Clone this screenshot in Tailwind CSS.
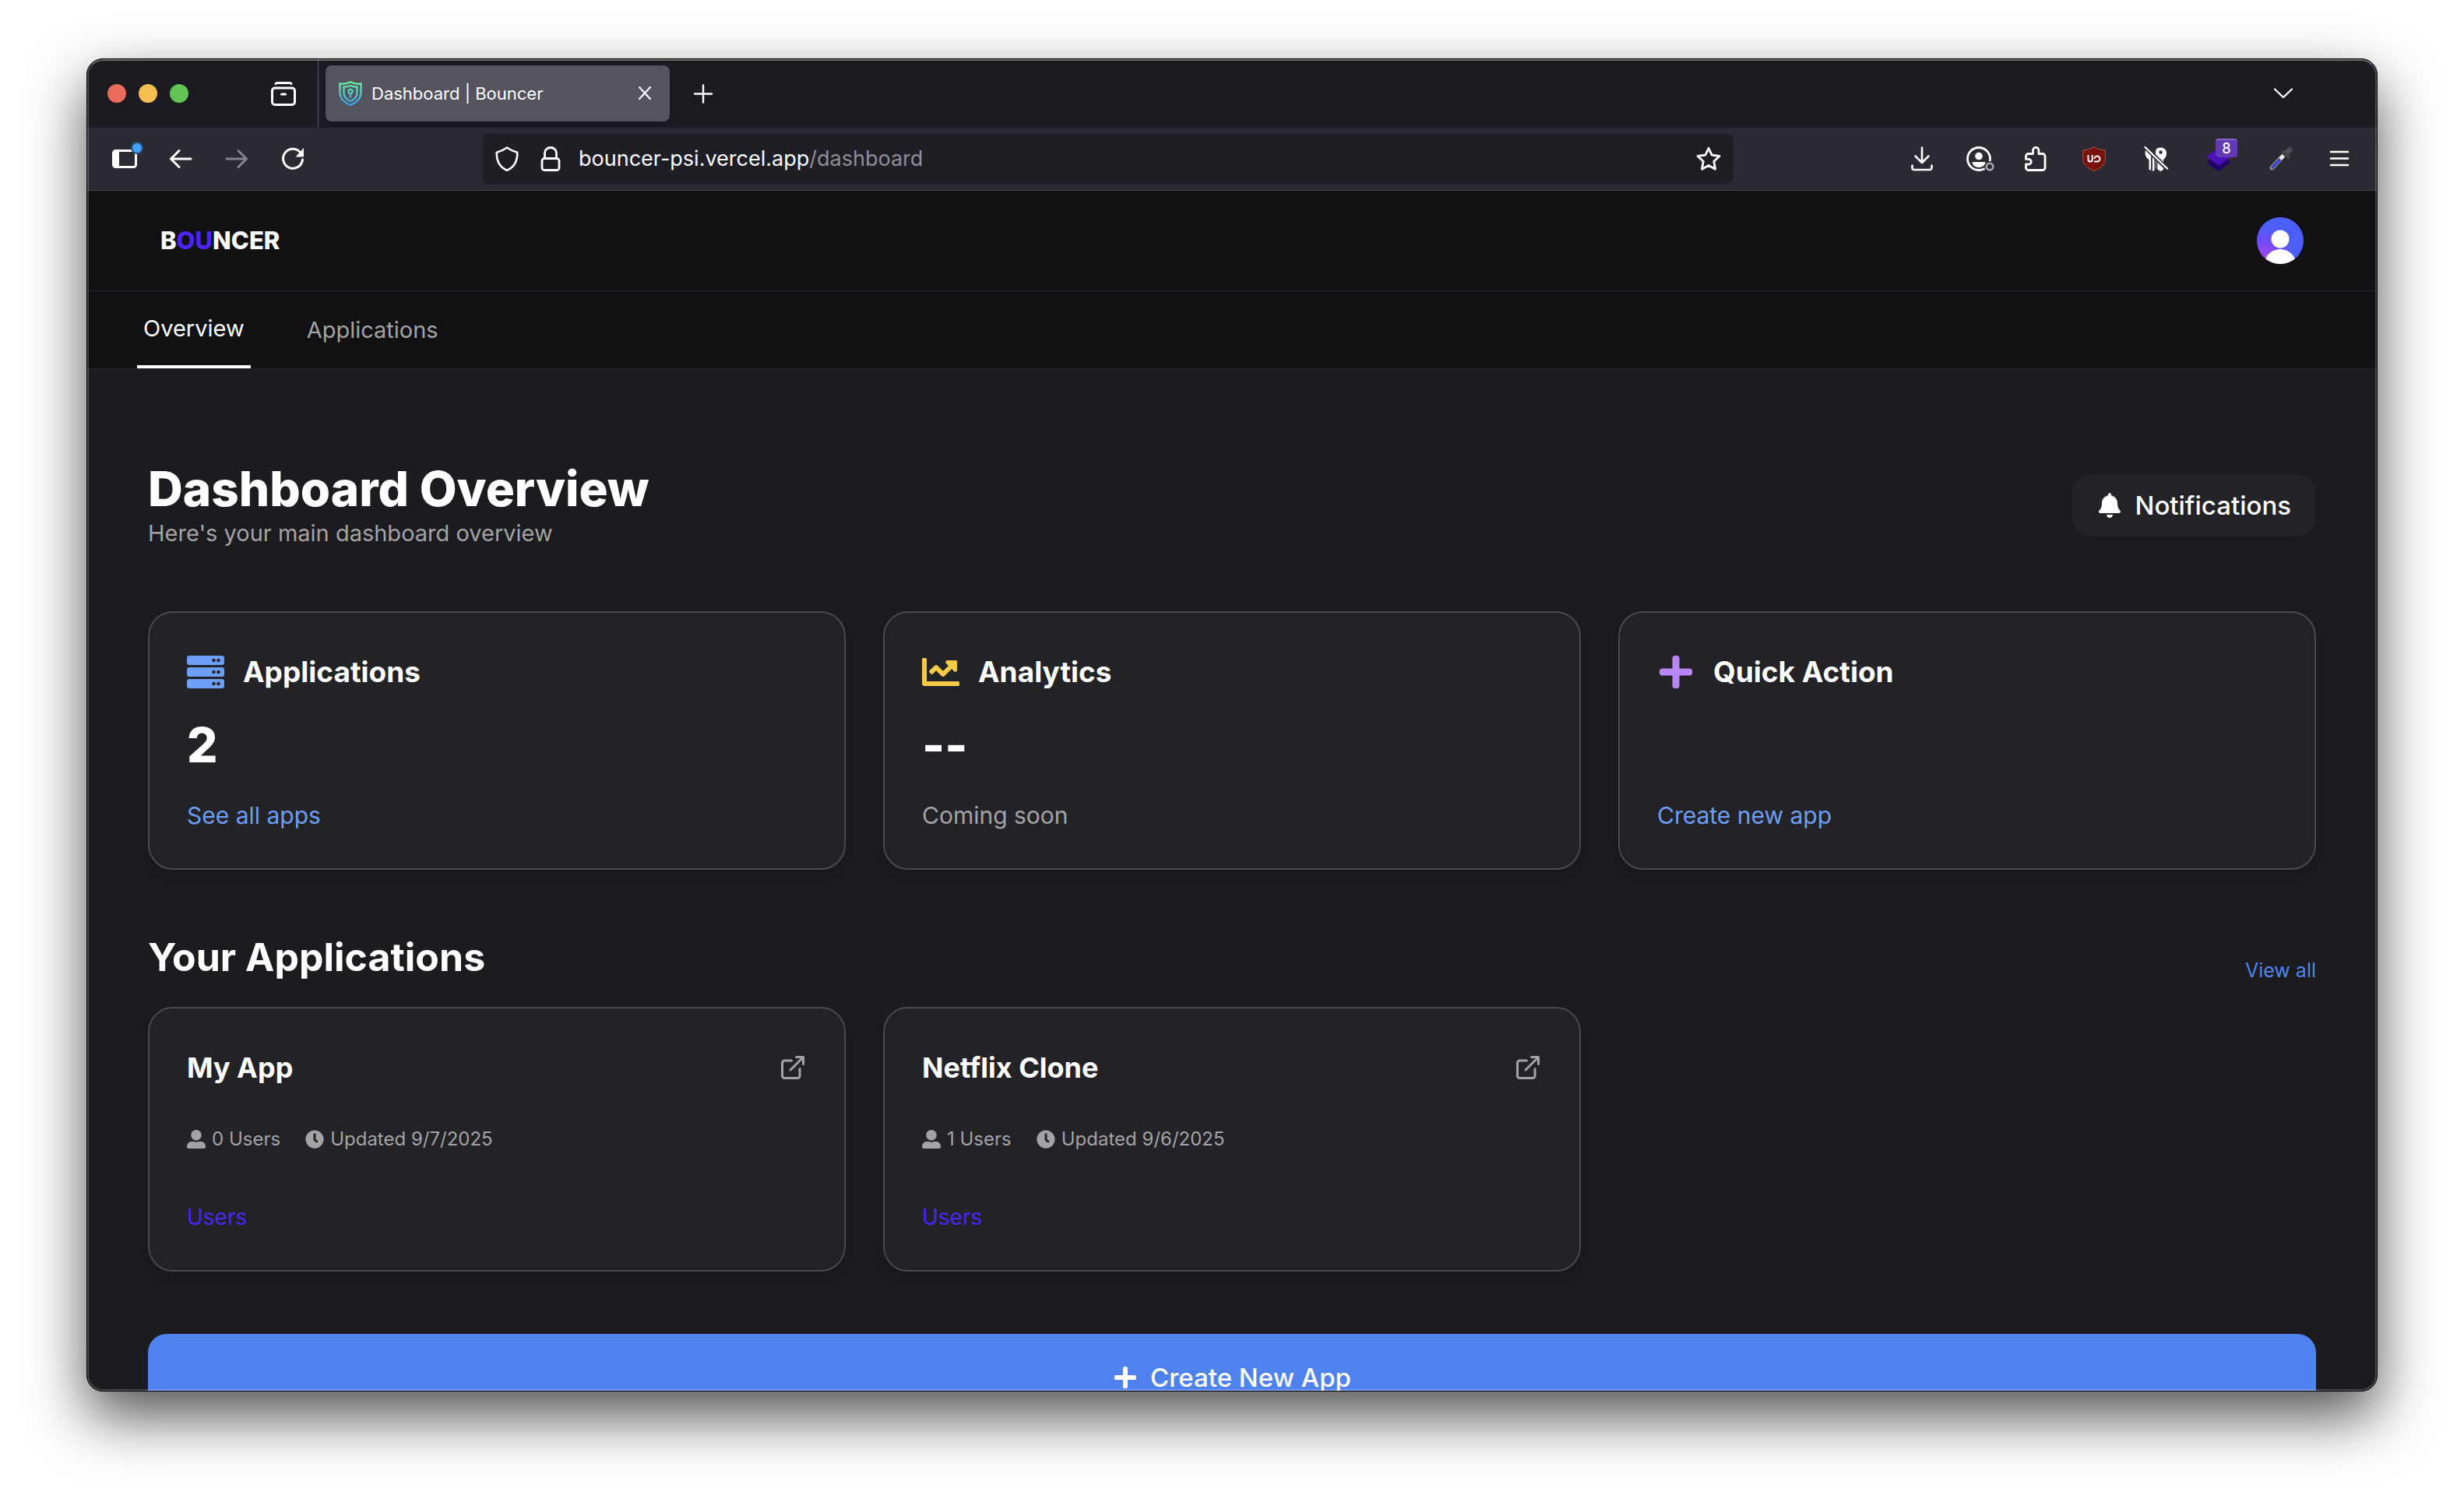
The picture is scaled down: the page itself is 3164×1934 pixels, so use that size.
<!DOCTYPE html>
<html lang="en">
<head>
<meta charset="utf-8">
<meta name="viewport" content="width=device-width, initial-scale=1">
<title>Dashboard | Bouncer</title>
<script src="https://cdn.jsdelivr.net/npm/@tailwindcss/browser@4"></script>
</head>
<body class="bg-white font-['Inter',sans-serif] text-white antialiased">
<svg class="hidden" aria-hidden="true">
  <symbol id="plus" viewBox="0 0 448 512"><path fill="currentColor" d="M416 208H272V64c0-17.67-14.33-32-32-32h-32c-17.67 0-32 14.33-32 32v144H32c-17.67 0-32 14.33-32 32v32c0 17.67 14.33 32 32 32h144v144c0 17.67 14.33 32 32 32h32c17.67 0 32-14.33 32-32V304h144c17.67 0 32-14.33 32-32v-32c0-17.67-14.33-32-32-32z"/></symbol>
  <symbol id="person" viewBox="0 0 512 512"><path fill="currentColor" d="M256 288c79.5 0 144-64.5 144-144S335.5 0 256 0 112 64.5 112 144s64.5 144 144 144zm128 32h-55.1c-22.2 10.2-46.9 16-72.9 16s-50.6-5.8-72.9-16H128c-70.7 0-128 57.3-128 128v16c0 26.5 21.5 48 48 48h416c26.5 0 48-21.5 48-48v-16c0-70.7-57.3-128-128-128z"/></symbol>
  <symbol id="clock" viewBox="0 0 512 512"><path fill="currentColor" d="M256,8C119,8,8,119,8,256S119,504,256,504,504,393,504,256,393,8,256,8Zm92.49,313h0l-20,25a16,16,0,0,1-22.49,2.5h0l-67-49.72a40,40,0,0,1-15-31.23V112a16,16,0,0,1,16-16h32a16,16,0,0,1,16,16V256l58,42.5A16,16,0,0,1,348.49,321Z"/></symbol>
  <symbol id="external" viewBox="0 0 24 24"><path fill="none" stroke="currentColor" stroke-width="2" stroke-linecap="round" stroke-linejoin="round" d="M18 13v6a2 2 0 0 1-2 2H5a2 2 0 0 1-2-2V8a2 2 0 0 1 2-2h6M15 3h6v6M10 14 21 3"/></symbol>
</svg>

<div class="flex h-screen px-[111px] pt-[75px] pb-[147px]">
  <div class="relative flex min-w-0 flex-1 flex-col overflow-hidden rounded-[21px] border border-black bg-[#1c1b1f] shadow-[0_32px_76px_rgba(0,0,0,0.68)]">

    <!-- Tab strip -->
    <div class="flex h-[88px] shrink-0 items-center bg-[#1c1b22] pl-[26px]">
      <div class="flex gap-4">
        <button type="button" aria-label="Close window" class="size-6 rounded-full bg-[#ec6a5e]"></button>
        <button type="button" aria-label="Minimise window" class="size-6 rounded-full bg-[#f4bf4f]"></button>
        <button type="button" aria-label="Zoom window" class="size-6 rounded-full bg-[#61c554]"></button>
      </div>
      <button type="button" aria-label="Recent browsing" class="ml-[106px] size-8">
        <svg viewBox="0 0 32 32" class="size-8" fill="none" stroke="currentColor" stroke-width="3" stroke-linecap="round"><path d="M6 3.500C6.500 2.500 7.500 2.500 8.500 2.500h15c1 0 2 0 2.500 1"/><rect x="1.500" y="9" width="29" height="21.500" rx="3.500"/><path d="M13.500 17h5"/></svg>
      </button>
      <div class="ml-7 w-px self-stretch bg-[#5b5a63]"></div>
      <div class="ml-[9px] flex h-[72px] w-[442px] items-center rounded-lg bg-[#55535e] pr-5 pl-4 shadow-md">
        <svg viewBox="0 0 32 32" class="size-8 shrink-0" fill="none" stroke="url(#fav)" stroke-width="2.400"><defs><linearGradient id="fav" x1="0" y1="0" x2="0" y2="32" gradientUnits="userSpaceOnUse"><stop stop-color="#6df0a0"/><stop offset=".45" stop-color="#4fcfc0"/><stop offset="1" stop-color="#3f9cf5"/></linearGradient></defs><path d="M16 1.200C11.500 3.700 6.500 4 2.500 3.500v11C2.500 22 8 28 16 30.800 24 28 29.500 22 29.500 14.500v-11C25.500 4 20.500 3.700 16 1.200z"/><path d="M16 6c-2.800 1.300-6 1.700-8.500 1.500v7.500c0 5 3.500 8.800 8.500 11 5-2.200 8.500-6 8.500-11V7.500C22 7.700 18.800 7.300 16 6z"/><circle cx="16" cy="13.500" r="2.600"/><path d="M16 16v5.500"/></svg>
        <span class="ml-[11px] flex-1 truncate text-[22px] leading-8">Dashboard | Bouncer</span>
        <button type="button" aria-label="Close tab" class="size-6"><svg viewBox="0 0 24 24" class="size-6" fill="none" stroke="currentColor" stroke-width="2.200" stroke-linecap="round"><path d="M5 4l14 15M19 4 5 19"/></svg></button>
      </div>
      <button type="button" aria-label="New tab" class="ml-[27px] size-8"><svg viewBox="0 0 32 32" class="size-8" fill="none" stroke="currentColor" stroke-width="2.400" stroke-linecap="round"><path d="M16 5.500v22M5 16.500h22"/></svg></button>
      <button type="button" aria-label="List all tabs" class="mr-[104px] ml-auto size-8"><svg viewBox="0 0 32 32" class="size-8" fill="none" stroke="currentColor" stroke-width="2.400" stroke-linecap="round" stroke-linejoin="round"><path d="M5 10.500l11 10.500 11-10.500"/></svg></button>
    </div>

    <!-- Navigation toolbar -->
    <div class="flex h-[81px] shrink-0 items-center border-b border-[#424148] bg-[#2b2a33] px-8">
      <div class="flex gap-10">
        <button type="button" aria-label="Sidebar" class="relative size-8">
          <svg viewBox="0 0 32 32" class="size-8"><rect x="1.500" y="5.500" width="29" height="21" rx="3" fill="none" stroke="currentColor" stroke-width="3"/><path fill="currentColor" d="M2 5h7v22H2z"/></svg>
          <span class="absolute -top-1 -right-1.5 size-3 rounded-full bg-[#45a1ff] ring-2 ring-[#23536f]"></span>
        </button>
        <button type="button" aria-label="Back" class="size-8"><svg viewBox="0 0 32 32" class="size-8" fill="none" stroke="currentColor" stroke-width="3" stroke-linecap="round" stroke-linejoin="round"><path d="M29 16H3.500M14 5.500 3.500 16 14 26.500"/></svg></button>
        <button type="button" aria-label="Forward" disabled class="size-8 text-[#85848a]"><svg viewBox="0 0 32 32" class="size-8" fill="none" stroke="currentColor" stroke-width="3" stroke-linecap="round" stroke-linejoin="round"><path d="M3 16h25.500M18 5.500 28.500 16 18 26.500"/></svg></button>
        <button type="button" aria-label="Reload" class="size-8"><svg viewBox="0 0 32 32" class="size-8"><path fill="none" stroke="currentColor" stroke-width="3" stroke-linecap="round" d="M28.500 17A12.500 12.500 0 1 1 25 7"/><path fill="currentColor" d="M30 2v10.500a1 1 0 0 1-1 1H19.500z"/></svg></button>
      </div>
      <div class="mr-[226px] ml-[227px] flex h-16 min-w-0 flex-1 items-center rounded-lg bg-[#1f1e25] px-4">
        <button type="button" aria-label="Tracking protection" class="size-8"><svg viewBox="0 0 32 32" class="size-8" fill="none" stroke="currentColor" stroke-width="2.600" stroke-linejoin="round"><path d="M16 1.500c-4 3-8 5-13.200 6.200C2.500 17 5 26 16 30.800 27 26 29.500 17 29.200 7.700 24 6.500 20 4.500 16 1.500z"/></svg></button>
        <button type="button" aria-label="Site security" class="ml-6 size-8"><svg viewBox="0 0 32 32" class="size-8" fill="none" stroke="currentColor" stroke-width="2.800"><rect x="5" y="15.500" width="22" height="15" rx="3"/><path d="M8.500 15.500V8.500a7.500 7 0 0 1 15 0v7"/></svg></button>
        <div role="textbox" aria-label="Address" contenteditable="true" class="ml-5 min-w-0 flex-1 truncate text-[27px] leading-10 text-[#8f8e95]"><span class="text-[#fbfbfe]">bouncer-psi.vercel.app</span>/dashboard</div>
        <button type="button" aria-label="Bookmark this page" class="size-8"><svg viewBox="0 0 32 32" class="size-8" fill="none" stroke="currentColor" stroke-width="2.800" stroke-linejoin="round"><path d="M16 2.300l4.200 8.900 9.800 1.300-7.200 6.800 1.800 9.900L16 24.500l-8.600 4.700 1.800-9.900L2 12.500l9.800-1.300z"/></svg></button>
      </div>
      <div class="flex items-center gap-[41px]">
        <button type="button" aria-label="Downloads" class="size-8"><svg viewBox="0 0 32 32" class="size-8" fill="none" stroke="currentColor" stroke-width="2.600" stroke-linecap="round" stroke-linejoin="round"><path d="M16 1.500v19M7.500 12.500l8.500 8.500 8.500-8.500M3.500 24.500v3a2.500 2.500 0 0 0 2.500 2.500h20a2.500 2.500 0 0 0 2.500-2.500v-3"/></svg></button>
        <button type="button" aria-label="Account" class="size-8"><svg viewBox="0 0 36 32" class="h-8 w-9 max-w-none"><circle cx="16" cy="16" r="14.500" fill="none" stroke="currentColor" stroke-width="2.800"/><circle cx="16" cy="12.500" r="4.800" fill="currentColor"/><path fill="currentColor" d="M7.500 20h17c0 4-4 7-8.500 7s-8.500-3-8.500-7z"/><circle cx="30" cy="26" r="7" fill="#2b2a33"/><circle cx="30" cy="26" r="4.300" fill="none" stroke="#a9a8ae" stroke-width="2.600"/></svg></button>
        <button type="button" aria-label="Extensions" class="size-8"><svg viewBox="0 0 32 32" class="size-8" fill="none" stroke="currentColor" stroke-width="2.800" stroke-linejoin="round"><path d="M12.500 9.500V5a3.700 3.700 0 0 1 7.400 0v4.500H25a3 3 0 0 1 3 3v15a3 3 0 0 1-3 3H6.500a3 3 0 0 1-3-3V23H7a3.300 3.300 0 0 0 0-6.600H3.500v-3.900a3 3 0 0 1 3-3z"/></svg></button>
      </div>
      <div class="mx-[43px] flex items-center gap-12">
        <button type="button" aria-label="Content blocker" class="size-8"><svg viewBox="0 0 32 32" class="size-8"><path d="M16 .7c-5 3-9.500 4-14.300 4.300v11C1.700 23 7 28 16 31.300 25 28 30.300 23 30.300 16V5C25.500 4.700 21 3.700 16 .7z" fill="#7a120c" stroke="#a9504c"/><path fill="none" stroke="#fff" stroke-width="2" d="M8.500 11v6a2.600 2.600 0 0 0 5.200 0V11"/><path fill="none" stroke="#fff" stroke-width="2" d="M16 19.500h4a3.500 3.500 0 1 0-3.500-3.500"/></svg></button>
        <button type="button" aria-label="Passwords off" class="size-8"><svg viewBox="0 0 32 32" class="size-8"><path fill="currentColor" d="M1.500 8c0-2.500 1.500-5 4-6l6 5 2 3V31l-3 1-4-2.500V17C3.500 15.500 1.500 12 1.500 8zM17 2.500c5-2.500 12-.5 12 6 0 4-1.500 7-4 8.500V30l-3.500 2L15 28V8c0-2.500.5-4.500 2-5.500z"/><circle cx="21.500" cy="7.500" r="2.200" fill="#2b2a33"/><path d="M1 0l30 30" stroke="#2b2a33" stroke-width="5.500"/><path d="M10 13v19M16.500 19v13" stroke="#2b2a33" stroke-width="1.800"/><path d="M1.500 1l28.500 27.500" stroke="currentColor" stroke-width="2.400" stroke-linecap="round"/></svg></button>
        <button type="button" aria-label="Layers, 8 items" class="relative size-8">
          <svg viewBox="0 0 32 32" class="size-8"><path fill="#22066b" d="M0 20.500 16 9l16 11.500L16 32z"/><path fill="#4a12b8" d="M0 13 16 2l16 11-16 11.500z"/></svg>
          <span class="absolute -top-2.5 left-3 flex h-6 w-7 items-center justify-center rounded border-t-2 border-[#8765c8] bg-[#6439b5] text-[18px] leading-5 font-medium">8</span>
        </button>
        <button type="button" aria-label="Colour picker" class="size-8"><svg viewBox="0 0 32 32" class="size-8" stroke-linecap="round"><path stroke="#8b8b9c" stroke-width="6" d="M4.500 27.500 17 14"/><path stroke="#3c43c4" stroke-width="3.500" d="M5 27 14 17.500"/><path stroke="#e6e6ea" stroke-width="5" d="M16.500 14.500 19 12"/><path stroke="#4c4b50" stroke-width="7" d="M22 9.500 27 4.500"/><path stroke="#424147" stroke-width="4" d="M18 7l8 7.500"/></svg></button>
      </div>
      <button type="button" aria-label="Menu" class="size-8"><svg viewBox="0 0 32 32" class="size-8" fill="none" stroke="currentColor" stroke-width="2.600" stroke-linecap="round"><path d="M5 7h22M5 15.500h22M5 24h22"/></svg></button>
    </div>

    <!-- Page -->
    <header class="flex h-[129px] shrink-0 items-center justify-between border-b border-[#1e2530] bg-[#111113] px-[94px]">
      <a href="#" class="text-[31px] leading-10 font-extrabold text-[#f9fafb]">B<span class="text-[#4a25f4]">OU</span>NCER</a>
      <button type="button" aria-label="Account menu" class="size-[60px]">
        <svg viewBox="0 0 60 60" class="size-[60px]"><defs><radialGradient id="av" cx="10" cy="50" r="38" gradientUnits="userSpaceOnUse"><stop stop-color="#a347f0"/><stop offset=".5" stop-color="#704cf6"/><stop offset="1" stop-color="#4b5ef8"/></radialGradient><clipPath id="avc"><circle cx="30" cy="30" r="30"/></clipPath></defs><g clip-path="url(#avc)"><path fill="url(#av)" d="M0 0h60v60H0z"/><circle cx="30" cy="28" r="11.500" fill="#fff"/><circle cx="30" cy="62" r="21" fill="#fff"/></g></svg>
      </button>
    </header>
    <nav class="flex h-[100px] shrink-0 gap-16 border-b border-[#1e2530] bg-[#111113] px-16 text-[29px] leading-10">
      <a href="#" aria-current="page" class="flex items-center border-b-4 border-white px-2">Overview</a>
      <a href="#" class="flex items-center px-2 text-[#a3a3a6]">Applications</a>
    </nav>

    <main class="min-h-0 flex-1 overflow-hidden px-[78px] pt-[118px]">
      <div class="flex items-center justify-between">
        <div>
          <h1 class="text-[62px] leading-[72px] font-extrabold">Dashboard Overview</h1>
          <p class="text-[29px] leading-[42px] text-[#a3a3a6]">Here's your main dashboard overview</p>
        </div>
        <button type="button" class="flex h-20 items-center gap-4 rounded-3xl bg-[#232227] px-8 text-[33px] leading-10 font-medium">
          <svg viewBox="0 0 448 512" class="size-8" fill="currentColor"><path d="M224 512c35.320 0 63.970-28.650 63.970-64H160.030c0 35.350 28.650 64 63.970 64zm215.390-149.710c-19.320-20.760-55.470-51.990-55.470-154.290 0-77.700-54.480-139.900-127.940-155.160V32c0-17.670-14.320-32-31.980-32s-31.980 14.330-31.980 32v20.840C118.560 68.100 64.080 130.300 64.080 208c0 102.300-36.150 133.530-55.470 154.290-6 6.450-8.660 14.160-8.610 21.710.11 16.400 12.980 32 32.100 32h383.800c19.120 0 32-15.600 32.100-32 .05-7.550-2.610-15.270-8.610-21.710z"/></svg>
          Notifications
        </button>
      </div>

      <section class="mt-[79px] grid grid-cols-3 gap-12" aria-label="Summary">
        <article class="rounded-[32px] border-2 border-[#4a4a4d] bg-[#232227] p-12 shadow-lg">
          <h2 class="flex h-14 items-center gap-6 text-[37px] font-bold">
            <svg viewBox="0 0 512 512" class="size-12 text-[#6d9ff6]" fill="currentColor"><path fill-rule="evenodd" d="M32 32h448a32 32 0 0 1 32 32v64a32 32 0 0 1-32 32H32a32 32 0 0 1-32-32V64a32 32 0 0 1 32-32zM432 72a24 24 0 1 0 0 48 24 24 0 1 0 0-48zM368 72a24 24 0 1 0 0 48 24 24 0 1 0 0-48zM32 192h448a32 32 0 0 1 32 32v64a32 32 0 0 1-32 32H32a32 32 0 0 1-32-32v-64a32 32 0 0 1 32-32zM432 232a24 24 0 1 0 0 48 24 24 0 1 0 0-48zM368 232a24 24 0 1 0 0 48 24 24 0 1 0 0-48zM32 352h448a32 32 0 0 1 32 32v64a32 32 0 0 1-32 32H32a32 32 0 0 1-32-32v-64a32 32 0 0 1 32-32zM432 392a24 24 0 1 0 0 48 24 24 0 1 0 0-48zM368 392a24 24 0 1 0 0 48 24 24 0 1 0 0-48z"/></svg>
            Applications
          </h2>
          <p class="mt-8 h-[68px] text-[62px] leading-[68px] font-extrabold">2</p>
          <a href="#" class="mt-9 block text-[30px] leading-10 text-[#6d9ff6]">See all apps</a>
        </article>
        <article class="rounded-[32px] border-2 border-[#4a4a4d] bg-[#232227] p-12 shadow-lg">
          <h2 class="flex h-14 items-center gap-6 text-[37px] font-bold">
            <svg viewBox="0 0 512 512" class="size-12 text-[#f3cb46]" fill="currentColor"><path d="M496 384H64V80c0-8.840-7.160-16-16-16H16C7.160 64 0 71.160 0 80v336c0 17.670 14.330 32 32 32h464c8.840 0 16-7.160 16-16v-32c0-8.840-7.160-16-16-16zM464 96H345.940c-21.380 0-32.090 25.850-16.970 40.970l32.400 32.400L288 242.750l-73.370-73.370c-12.500-12.500-32.760-12.500-45.250 0l-68.690 68.690c-6.250 6.250-6.250 16.380 0 22.630l22.620 22.620c6.250 6.250 16.380 6.250 22.630 0L192 237.250l73.370 73.370c12.500 12.500 32.760 12.500 45.250 0l96-96 32.400 32.400c15.120 15.120 40.970 4.410 40.970-16.970V112c.01-8.840-7.150-16-15.990-16z"/></svg>
            Analytics
          </h2>
          <p class="mt-8 h-[68px] text-[62px] leading-[68px] font-extrabold">--</p>
          <p class="mt-9 text-[30px] leading-10 text-[#a3a3a6]">Coming soon</p>
        </article>
        <article class="rounded-[32px] border-2 border-[#4a4a4d] bg-[#232227] p-12 shadow-lg">
          <h2 class="flex h-14 items-center gap-6 text-[37px] font-bold">
            <svg class="size-12 text-[#b886f5]"><use href="#plus"/></svg>
            Quick Action
          </h2>
          <p class="mt-8 h-[68px]"></p>
          <a href="#" class="mt-9 block text-[30px] leading-10 text-[#6d9ff6]">Create new app</a>
        </article>
      </section>

      <div class="mt-[77px] flex items-end justify-between">
        <h2 class="text-[50px] leading-[70px] font-bold">Your Applications</h2>
        <a href="#" class="text-[25px] leading-9 text-[#4f83ef]">View all</a>
      </div>

      <section class="mt-[29px] grid grid-cols-3 gap-12" aria-label="Your applications">
        <article class="rounded-[32px] border-2 border-[#4a4a4d] bg-[#232227] p-12 shadow-lg">
          <div class="flex h-14 items-center justify-between">
            <h3 class="text-[36px] font-bold">My App</h3>
            <a href="#" aria-label="Open My App"><svg class="size-9 text-[#a3a3a6]"><use href="#external"/></svg></a>
          </div>
          <div class="mt-[46px] flex gap-8 text-[24px] leading-9 text-[#a3a3a6]">
            <span class="flex items-center gap-2"><svg class="size-6"><use href="#person"/></svg>0 Users</span>
            <span class="flex items-center gap-2"><svg class="size-6"><use href="#clock"/></svg>Updated 9/7/2025</span>
          </div>
          <a href="#" class="mt-[62px] block text-[28px] leading-10 text-[#4a25f4]">Users</a>
        </article>
        <article class="rounded-[32px] border-2 border-[#4a4a4d] bg-[#232227] p-12 shadow-lg">
          <div class="flex h-14 items-center justify-between">
            <h3 class="text-[36px] font-bold">Netflix Clone</h3>
            <a href="#" aria-label="Open Netflix Clone"><svg class="size-9 text-[#a3a3a6]"><use href="#external"/></svg></a>
          </div>
          <div class="mt-[46px] flex gap-8 text-[24px] leading-9 text-[#a3a3a6]">
            <span class="flex items-center gap-2"><svg class="size-6"><use href="#person"/></svg>1 Users</span>
            <span class="flex items-center gap-2"><svg class="size-6"><use href="#clock"/></svg>Updated 9/6/2025</span>
          </div>
          <a href="#" class="mt-[62px] block text-[28px] leading-10 text-[#4a25f4]">Users</a>
        </article>
      </section>

      <button type="button" class="mt-20 flex h-28 w-full items-center justify-center gap-4 rounded-3xl bg-[#4f82ee] text-[33px] leading-10 font-medium">
        <svg class="size-8"><use href="#plus"/></svg>
        Create New App
      </button>
    </main>

    <!-- Window edge highlight -->
    <div class="pointer-events-none absolute inset-0 rounded-[20px] border-2 border-white/20 border-t-white/35"></div>
  </div>
</div>
</body>
</html>
